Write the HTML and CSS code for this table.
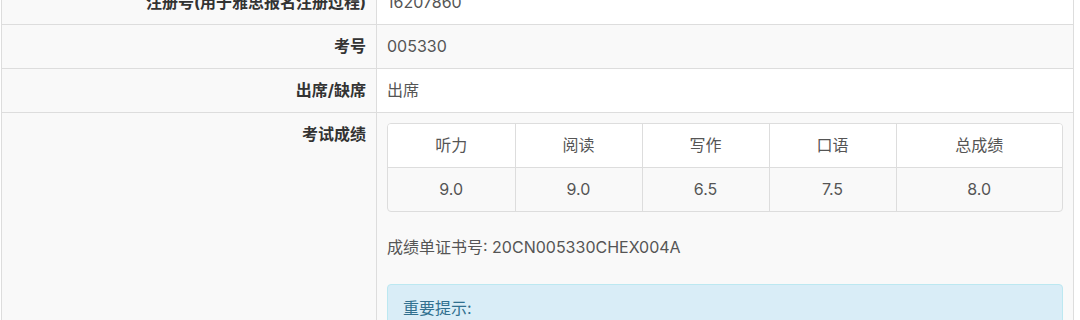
FILE: index.html
```html
<!DOCTYPE html>
<html lang="zh-CN">
<head>
<meta charset="utf-8">
<title>成绩</title>
<link rel="stylesheet" href="styles.css">
</head>
<body>
<div class="page">
  <table class="info">
    <tr>
      <th>注册号(用于雅思报名注册过程)</th>
      <td>16207860</td>
    </tr>
    <tr>
      <th>考号</th>
      <td>005330</td>
    </tr>
    <tr>
      <th>出席/缺席</th>
      <td>出席</td>
    </tr>
    <tr>
      <th>考试成绩</th>
      <td>
        <div class="scores-wrap">
          <table class="scores">
            <thead>
              <tr>
                <th class="col">听力</th>
                <th class="col">阅读</th>
                <th class="col">写作</th>
                <th class="col">口语</th>
                <th class="col-total">总成绩</th>
              </tr>
            </thead>
            <tbody>
              <tr>
                <td>9.0</td>
                <td>9.0</td>
                <td>6.5</td>
                <td>7.5</td>
                <td>8.0</td>
              </tr>
            </tbody>
          </table>
        </div>
        <p class="cert">成绩单证书号: 20CN005330CHEX004A</p>
        <div class="alert">
          <p class="alert-title">重要提示:</p>
        </div>
      </td>
    </tr>
  </table>
</div>
</body>
</html>
```

FILE: styles.css
```css
html, body {
  margin: 0;
  padding: 0;
  background: #ffffff;
}

body {
  font-family: "Inter", "Noto Sans CJK SC", sans-serif;
  font-size: 16px;
  line-height: 23px;
  color: #555555;
  overflow: hidden;
}

.page {
  margin-top: -20px;
  padding-left: 1px;
}

.info {
  width: 1073px;
  border-collapse: collapse;
  border: 1px solid #dddddd;
}

.info > tbody > tr > th,
.info > tbody > tr > td {
  border: 1px solid #dddddd;
  padding: 10px;
  vertical-align: top;
  text-align: left;
  font-weight: normal;
}

.info > tbody > tr > th {
  width: 354px;
  text-align: right;
  font-weight: bold;
  color: #333333;
  background: #f9f9f9;
}

.info > tbody > tr > td {
  background: #ffffff;
}

.info > tbody > tr:nth-child(even) > td {
  background: #f9f9f9;
}

.scores-wrap {
  border: 1px solid #dddddd;
  border-radius: 4px;
  overflow: hidden;
  margin-bottom: 24px;
}

.scores {
  width: 100%;
  border-collapse: collapse;
  table-layout: fixed;
}

.scores th,
.scores td {
  box-sizing: border-box;
  padding: 10px 8px;
  text-align: center;
  font-weight: normal;
  color: #555555;
  border-left: 1px solid #dddddd;
}

.scores th:first-child,
.scores td:first-child {
  border-left: none;
}

.scores thead th {
  background: #ffffff;
  border-bottom: 1px solid #dddddd;
}

.scores .col {
  width: 127px;
}

.cert {
  margin: 0 0 25px 0;
  color: #555555;
}

.alert {
  background: #d9edf7;
  border: 1px solid #bce8f1;
  border-radius: 4px;
  padding: 12px 15px;
  color: #31708f;
}

.alert-title {
  margin: 0;
}
```
